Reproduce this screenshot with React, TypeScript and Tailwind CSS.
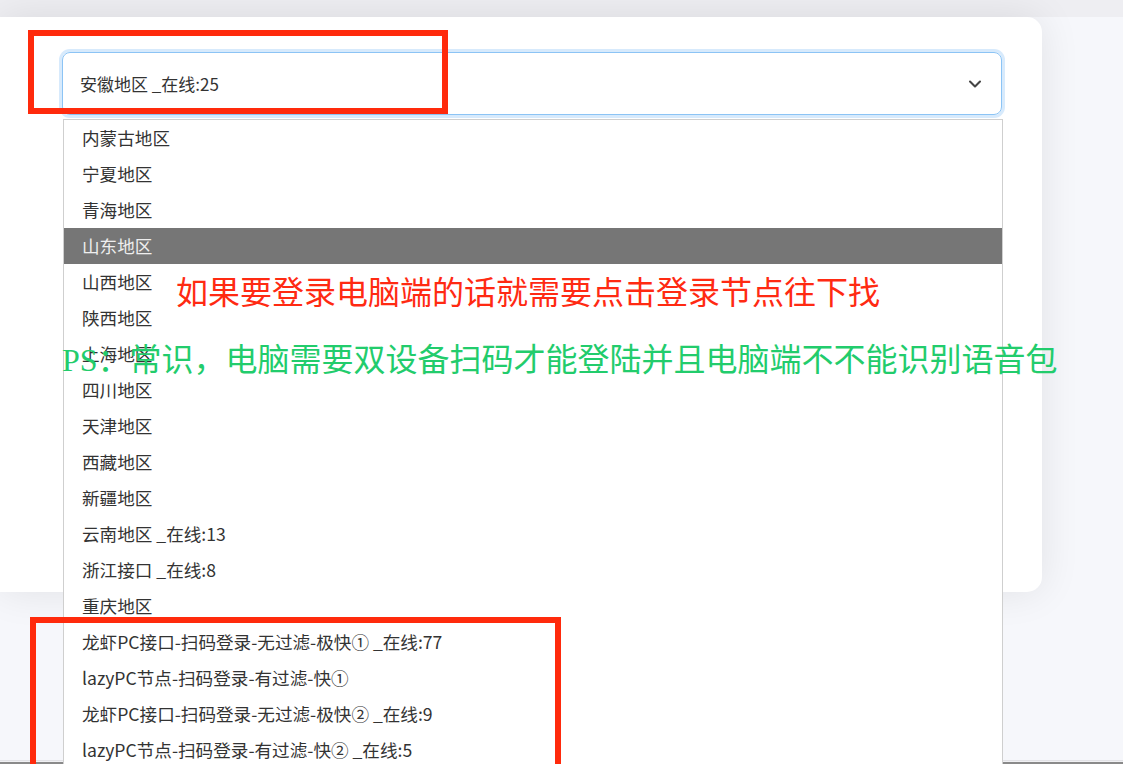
import { ChevronDown } from 'lucide-react';

const regions = [
  '内蒙古地区',
  '宁夏地区',
  '青海地区',
  '山东地区',
  '山西地区',
  '陕西地区',
  '上海地区',
  '四川地区',
  '天津地区',
  '西藏地区',
  '新疆地区',
  '云南地区 _在线:13',
  '浙江接口 _在线:8',
  '重庆地区',
  '龙虾PC接口-扫码登录-无过滤-极快① _在线:77',
  'lazyPC节点-扫码登录-有过滤-快①',
  '龙虾PC接口-扫码登录-无过滤-极快② _在线:9',
  'lazyPC节点-扫码登录-有过滤-快② _在线:5',
  '北京地区',
];

export default function App() {
  return (
    <div className="relative h-[764px] w-full overflow-hidden bg-[#f6f7fb] font-['Noto_Sans_CJK_SC',sans-serif]">
      {/* top strip */}
      <div className="h-[17px] bg-[#eeeef2]" />

      {/* main card */}
      <div className="h-[575px] w-[1042px] rounded-r-[15px] bg-white pl-[62px] pt-[35px] shadow-[0_0_40px_rgba(0,0,0,0.09)]">
        <div className="flex h-[63px] w-[940px] items-center justify-between rounded-[8px] border border-[#8cc4f5] pl-[17px] pr-[16px] shadow-[0_0_0_3px_rgba(140,196,245,0.35)]">
          <span className="text-[17px] text-[#333]">安徽地区 _在线:25</span>
          <ChevronDown className="h-5 w-5 text-[#444]" strokeWidth={2.5} />
        </div>
      </div>

      {/* bottom edge */}
      <div className="absolute bottom-0 left-0 right-0 h-[4px] border-t border-[#e2e2e6] bg-[#f0f0f3]">
        <div className="absolute bottom-0 left-0 right-0 h-[2px] bg-[#8a8a8a]" />
      </div>

      {/* open native dropdown */}
      <div className="absolute left-[63px] top-[119px] w-[940px] border border-[#cfcfcf] bg-white">
        {regions.map((r, i) => (
          <div
            key={i}
            className={
              i === 3
                ? 'flex h-[36px] items-center bg-[#767676] pl-[18px] text-[17.6px] text-[#eeeeee]'
                : 'flex h-[36px] items-center pl-[18px] text-[17.6px] text-[#333]'
            }
          >
            {r}
          </div>
        ))}
      </div>

      {/* annotations */}
      <div className="absolute left-[28px] top-[30px] h-[84px] w-[420px] border-[6px] border-[#ff2a0c]" />
      <div className="absolute left-[30px] top-[617px] h-[200px] w-[531px] border-[6px] border-[#ff2a0c]" />

      <div className="absolute left-[176px] top-[271px] whitespace-nowrap text-[32px] leading-[38px] text-[#ff2a12]">
        如果要登录电脑端的话就需要点击登录节点往下找
      </div>
      <div className="absolute left-[62px] top-[338px] whitespace-nowrap text-[32px] leading-[38px] text-[#22cc6c]">
        <span className="font-['Liberation_Serif',serif]">PS</span>：常识，电脑需要双设备扫码才能登陆并且电脑端不不能识别语音包
      </div>
    </div>
  );
}
